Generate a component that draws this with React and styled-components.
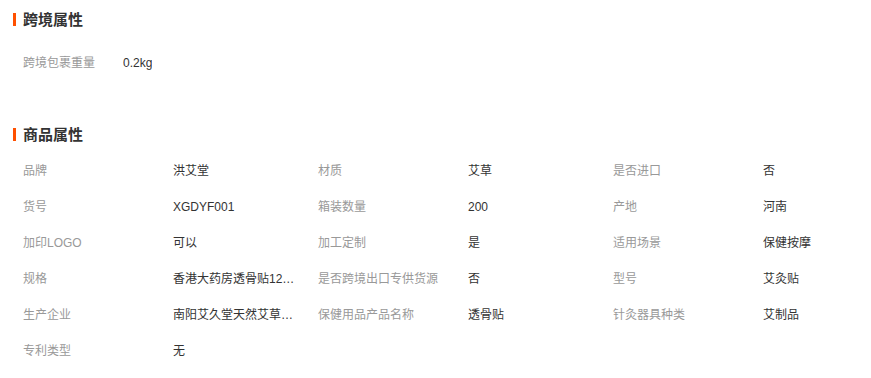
import React from 'react'
import styled, { createGlobalStyle } from 'styled-components'

const GlobalStyle = createGlobalStyle`
body{
    margin:0;
    background:#fff;
    overflow:hidden;
    font-family:"Liberation Sans","Noto Sans CJK SC",sans-serif;
}
`

const crossAttrs = [
    { name: '跨境包裹重量', value: '0.2kg' }
]

const goodsAttrs = [
    { name: '品牌', value: '洪艾堂' },
    { name: '材质', value: '艾草' },
    { name: '是否进口', value: '否' },
    { name: '货号', value: 'XGDYF001' },
    { name: '箱装数量', value: '200' },
    { name: '产地', value: '河南' },
    { name: '加印LOGO', value: '可以' },
    { name: '加工定制', value: '是' },
    { name: '适用场景', value: '保健按摩' },
    { name: '规格', value: '香港大药房透骨贴12贴/盒' },
    { name: '是否跨境出口专供货源', value: '否' },
    { name: '型号', value: '艾灸贴' },
    { name: '生产企业', value: '南阳艾久堂天然艾草制品有限公司' },
    { name: '保健用品产品名称', value: '透骨贴' },
    { name: '针灸器具种类', value: '艾制品' },
    { name: '专利类型', value: '无' }
]

const AttributePanel = () => {
    return (
        <Page>
            <GlobalStyle />
            <Title>跨境属性</Title>
            <CrossList>
                {
                    crossAttrs.map(attr => (
                        <CrossRow key={attr.name}>
                            <CrossLabel>{attr.name}</CrossLabel>
                            <Value>{attr.value}</Value>
                        </CrossRow>
                    ))
                }
            </CrossList>
            <Title $gap>商品属性</Title>
            <Grid>
                {
                    goodsAttrs.map(attr => (
                        <React.Fragment key={attr.name}>
                            <Label>{attr.name}</Label>
                            <Value title={attr.value}>{attr.value}</Value>
                        </React.Fragment>
                    ))
                }
            </Grid>
        </Page>
    )
}

const Page = styled.div`
padding:13px 0 0 13px;
`

const Title = styled.h3`
margin:${props => props.$gap ? '47px' : '0'} 0 0 0;
height:13px;
border-left:3px solid #ff5000;
padding-left:7px;
font-size:15px;
font-weight:bold;
line-height:13px;
color:#333;
`

const CrossList = styled.div`
margin-top:19px;
padding-left:10px;
`

const CrossRow = styled.div`
display:flex;
height:36px;
line-height:36px;
`

const CrossLabel = styled.span`
width:100px;
font-size:12px;
color:#999;
`

const Grid = styled.div`
margin-top:12px;
padding-left:10px;
display:grid;
grid-template-columns:150px 145px 150px 145px 150px auto;
grid-auto-rows:36px;
line-height:36px;
font-size:12px;
`

const Label = styled.span`
color:#999;
font-size:12px;
white-space:nowrap;
`

const Value = styled.span`
color:#333;
font-size:12px;
max-width:124px;
white-space:nowrap;
overflow:hidden;
text-overflow:ellipsis;
`

export default AttributePanel
